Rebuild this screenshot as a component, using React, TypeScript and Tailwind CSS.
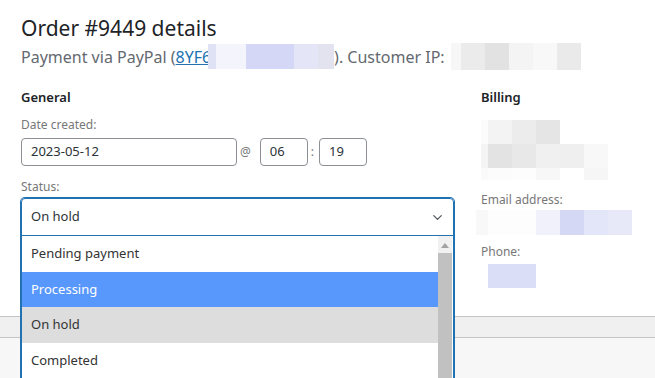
import { ChevronDown } from "lucide-react";

// mosaic blocks used to mask private data in the screenshot
const paymentBlur = [
  { w: "w-[8px]", c: "bg-[#dfe2f4]" },
  { w: "w-[30px]", c: "bg-[#f3f4fc]" },
  { w: "w-[48px]", c: "bg-[#d4d8f6]" },
  { w: "w-[24px]", c: "bg-[#e4e6f7]" },
  { w: "w-[16px]", c: "bg-[#e2e3ef]" },
];

const ipBlur = [
  { w: "w-[10px]", c: "bg-[#f7f7f7]" },
  { w: "w-[24px]", c: "bg-[#ebebeb]" },
  { w: "w-[24px]", c: "bg-[#e2e2e2]" },
  { w: "w-[24px]", c: "bg-[#f4f4f4]" },
  { w: "w-[24px]", c: "bg-[#f8f8f8]" },
  { w: "w-[24px]", c: "bg-[#eaeaea]" },
];

const billingBlur = [
  [
    { w: "w-[7px]", c: "bg-[#fbfbfb]" },
    { w: "w-[24px]", c: "bg-[#f3f3f3]" },
    { w: "w-[24px]", c: "bg-[#ececec]" },
    { w: "w-[24px]", c: "bg-[#e5e5e5]" },
  ],
  [
    { w: "w-[7px]", c: "bg-[#f4f4f4]" },
    { w: "w-[24px]", c: "bg-[#e3e3e3]" },
    { w: "w-[24px]", c: "bg-[#e8e8e8]" },
    { w: "w-[24px]", c: "bg-[#f0f0f0]" },
    { w: "w-[24px]", c: "bg-[#efeff0]" },
    { w: "w-[24px]", c: "bg-[#f8f8f8]" },
  ],
  [
    { w: "w-[7px]", c: "bg-[#fafafa]" },
    { w: "w-[24px]", c: "bg-[#fcfcfc]" },
    { w: "w-[24px]", c: "bg-[#fdfdfd]" },
    { w: "w-[24px]", c: "bg-[#f7f7f7]" },
    { w: "w-[24px]", c: "bg-white" },
    { w: "w-[24px]", c: "bg-[#f6f6f6]" },
  ],
];

const emailBlur = [
  { w: "w-[12px]", c: "bg-[#f8f8f8]" },
  { w: "w-[48px]", c: "bg-[#fdfdfd]" },
  { w: "w-[24px]", c: "bg-[#f0f1fb]" },
  { w: "w-[24px]", c: "bg-[#d5d8f5]" },
  { w: "w-[24px]", c: "bg-[#e3e5f8]" },
  { w: "w-[24px]", c: "bg-[#e8e9f8]" },
];

const statuses = [
  { label: "Pending payment", cls: "bg-white text-[#333]" },
  { label: "Processing", cls: "bg-[#5897fb] text-white" },
  { label: "On hold", cls: "bg-[#dddddd] text-[#333]" },
  { label: "Completed", cls: "bg-white text-[#333]" },
];

function Blur({ blocks, h }: { blocks: { w: string; c: string }[]; h: string }) {
  return (
    <div className={`flex ${h}`}>
      {blocks.map((b, i) => (
        <div key={i} className={`${b.w} ${b.c} h-full`} />
      ))}
    </div>
  );
}

export default function App() {
  return (
    <div className="w-[655px] h-[378px] overflow-hidden bg-white font-['Noto_Sans',sans-serif]">
      <div className="px-[21px] pt-[15px]">
        <h2 className="text-[21px] leading-[26px] text-[#1d2327]">Order #9449 details</h2>
        <p className="mt-[2px] flex items-center text-[16px] leading-[22px] text-[#646970] whitespace-nowrap">
          Payment via PayPal (
          <span className="text-[#2271b1] underline">8YF</span>
          <span className="inline-block w-[6px] overflow-hidden text-[#2271b1] underline">6</span>
          <Blur blocks={paymentBlur} h="h-[25px]" />
          ). Customer IP:
          <span className="ml-[6px]">
            <Blur blocks={ipBlur} h="h-[27px]" />
          </span>
        </p>

        <div className="mt-[17px] flex gap-[27px]">
          {/* General */}
          <div className="w-[433px] shrink-0">
            <h3 className="text-[13px] leading-[20px] font-semibold text-[#1d2327]">General</h3>
            <div className="mt-[9px] text-[12px] leading-[18px] text-[#777]">Date created:</div>
            <div className="mt-[4px] flex items-center text-[13px] text-[#2c3338]">
              <div className="w-[216px] h-[28px] border border-[#8c8f94] rounded-[4px] pl-[9px] flex items-center">
                2023-05-12
              </div>
              <span className="ml-[3px] mr-[9px] text-[12px] text-[#777]">@</span>
              <div className="w-[48px] h-[28px] border border-[#8c8f94] rounded-[4px] pl-[9px] flex items-center">
                06
              </div>
              <span className="ml-[3px] mr-[5px] text-[12px] text-[#777]">:</span>
              <div className="w-[48px] h-[28px] border border-[#8c8f94] rounded-[4px] pl-[9px] flex items-center">
                19
              </div>
            </div>
            <div className="mt-[12px] text-[12px] leading-[18px] text-[#777]">Status:</div>
            <div className="relative mt-[2px] z-10">
              <div className="h-[38px] border border-[#2271b1] shadow-[0_0_0_1px_#2271b1] rounded-t-[4px] flex items-center justify-between pl-[9px] pr-[8px] text-[13px] text-[#2c3338]">
                <span>On hold</span>
                <ChevronDown className="w-[15px] h-[15px] text-[#50575e]" strokeWidth={2} />
              </div>
              {/* open dropdown list */}
              <div className="absolute left-0 right-0 top-full h-[160px] bg-white border-x border-[#2271b1] shadow-[0_0_0_1px_#2271b1] flex">
                <div className="flex-1 flex flex-col">
                  {statuses.map((s) => (
                    <div
                      key={s.label}
                      className={`h-[35.5px] shrink-0 flex items-center px-[9px] text-[13px] ${s.cls}`}
                    >
                      {s.label}
                    </div>
                  ))}
                </div>
                <div className="w-[14px] bg-[#f1f1f1] flex flex-col items-center mr-[1px]">
                  <svg width="8" height="5" viewBox="0 0 8 5" className="mt-[7px]">
                    <path d="M0 5 L4 0 L8 5 Z" fill="#a3a3a3" />
                  </svg>
                  <div className="mt-[5px] w-full flex-1 bg-[#c1c1c1]" />
                </div>
              </div>
            </div>
          </div>

          {/* Billing */}
          <div className="flex-1">
            <h3 className="text-[13px] leading-[20px] font-semibold text-[#1d2327]">Billing</h3>
            <div className="mt-[13px] flex flex-col">
              <Blur blocks={billingBlur[0]} h="h-[24px]" />
              <Blur blocks={billingBlur[1]} h="h-[24px]" />
              <Blur blocks={billingBlur[2]} h="h-[12px]" />
            </div>
            <div className="mt-[11px] text-[12px] leading-[18px] text-[#777]">Email address:</div>
            <div className="mt-[1px] -ml-[5px]">
              <Blur blocks={emailBlur} h="h-[25px]" />
            </div>
            <div className="mt-[8px] text-[12px] leading-[18px] text-[#777]">Phone:</div>
            <div className="mt-[3px] ml-[7px] w-[48px] h-[24px] bg-[#dadef7]" />
          </div>
        </div>
      </div>

      <div className="mt-[28px] h-[22px] border-y border-[#c3c4c7] bg-[#f0f0f1]" />
      <div className="h-[60px] bg-[#f7f7f7]" />
    </div>
  );
}
